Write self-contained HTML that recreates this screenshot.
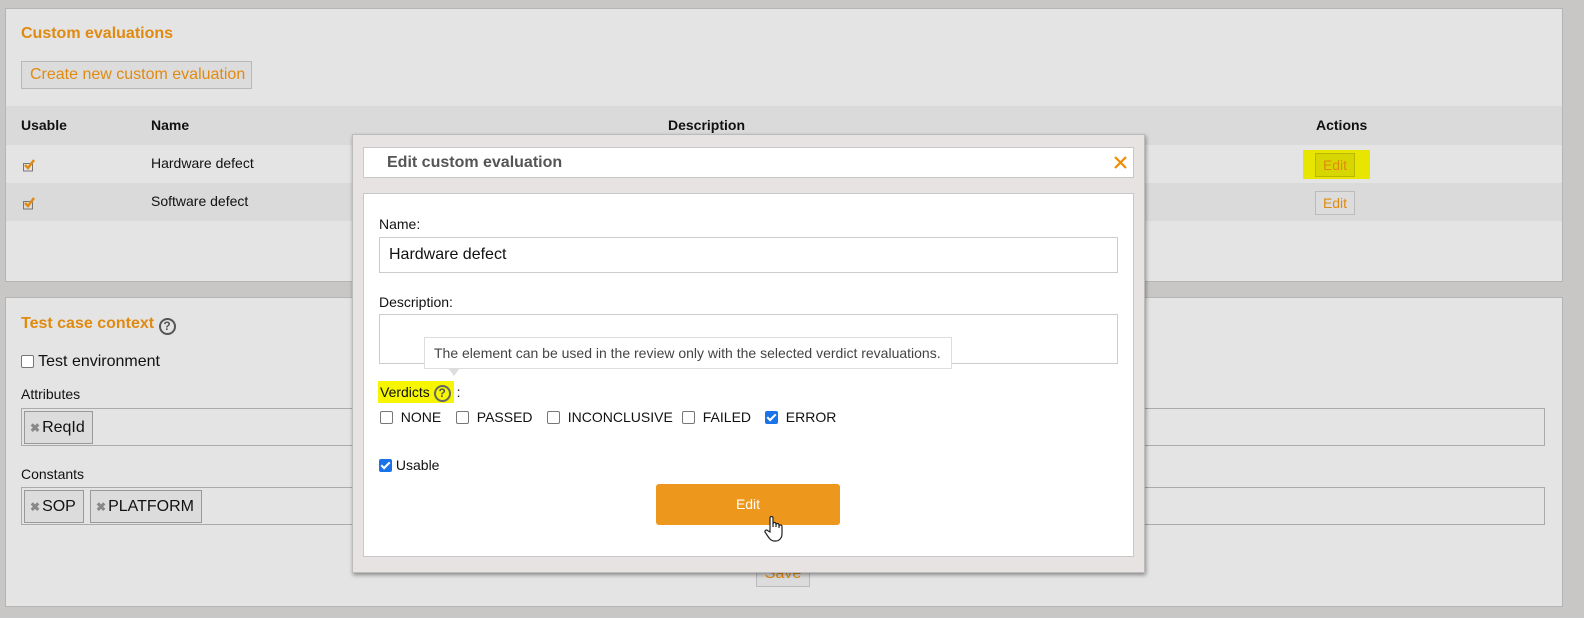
<!DOCTYPE html>
<html><head><meta charset="utf-8"><style>
*{box-sizing:border-box}
body{margin:0;width:1584px;height:618px;background:#c9c7c6;font-family:"Liberation Sans",Arial,sans-serif;position:relative;overflow:hidden;font-size:14px;color:#111}
.a{position:absolute}
.panel{background:#e4e4e4;border:1px solid #b5b5b5}
.or{color:#e08a10;font-weight:bold;font-size:16px}
.cb{display:inline-block;width:13px;height:13px;border:1.5px solid #777;border-radius:2px;background:#fff;vertical-align:-2px}
.cbc{display:inline-block;width:13px;height:13px;border-radius:2px;background:#1a73e8;vertical-align:-2px;position:relative}
.cbc:after{content:"";position:absolute;left:4px;top:1px;width:3px;height:7px;border:solid #fff;border-width:0 2px 2px 0;transform:rotate(45deg)}
.tag{position:absolute;background:#dcdcdc;border:1px solid #999;height:33px;font-size:16px;line-height:31px;padding:0 7px 0 5px}
.tag b{color:#888;font-size:12px;margin-right:2px}
.q{display:inline-block;width:17px;height:17px;border:2px solid #555;border-radius:50%;text-align:center;font-size:12px;line-height:13px;font-weight:bold;color:#555}
</style></head><body>
<div class="a panel" style="left:5px;top:8px;width:1558px;height:274px"></div>
<div class="a or" style="left:21px;top:25px">Custom evaluations</div>
<div class="a" style="left:21px;top:61px;width:231px;height:28px;background:#dcdcdc;border:1px solid #b8b8b8;color:#e08a10;font-size:16px;line-height:26px;padding-left:8px">Create new custom evaluation</div>
<div class="a" style="left:6px;top:106px;width:1556px;height:39px;background:#dadada"></div>
<div class="a" style="left:6px;top:183px;width:1556px;height:38px;background:#dadada"></div>
<div class="a" style="left:21px;top:117px;font-weight:bold">Usable</div>
<div class="a" style="left:151px;top:117px;font-weight:bold">Name</div>
<div class="a" style="left:668px;top:117px;font-weight:bold">Description</div>
<div class="a" style="left:1316px;top:117px;font-weight:bold">Actions</div>
<svg class="a" style="left:22px;top:158px" width="14" height="14" viewBox="0 0 14 14"><rect x="1.5" y="5.5" width="9" height="7.5" fill="none" stroke="#777" stroke-width="1"/><path d="M3 7 L6 10 L12 2" fill="none" stroke="#e08a10" stroke-width="2.5"/></svg>
<svg class="a" style="left:22px;top:196px" width="14" height="14" viewBox="0 0 14 14"><rect x="1.5" y="5.5" width="9" height="7.5" fill="none" stroke="#777" stroke-width="1"/><path d="M3 7 L6 10 L12 2" fill="none" stroke="#e08a10" stroke-width="2.5"/></svg>
<div class="a" style="left:151px;top:155px">Hardware defect</div>
<div class="a" style="left:151px;top:193px">Software defect</div>
<div class="a" style="left:1303px;top:150px;width:67px;height:29px;background:#e8e600"></div>
<div class="a" style="left:1315px;top:153px;width:40px;height:24px;border:1px solid #b8b800;background:#d8d600;color:#e08a10;text-align:center;line-height:22px">Edit</div>
<div class="a" style="left:1315px;top:191px;width:40px;height:24px;border:1px solid #bbb;background:#dcdcdc;color:#e08a10;text-align:center;line-height:22px">Edit</div>

<div class="a panel" style="left:5px;top:297px;width:1558px;height:310px"></div>
<div class="a or" style="left:21px;top:315px">Test case context <span class="q" style="vertical-align:-2px;font-size:12px">?</span></div>
<div class="a" style="left:21px;top:353px;font-size:16px"><span class="cb"></span> Test environment</div>
<div class="a" style="left:21px;top:386px">Attributes</div>
<div class="a" style="left:21px;top:408px;width:1524px;height:38px;border:1px solid #aaa;background:#e4e4e4"></div>
<div class="tag" style="left:24px;top:411px"><b>✖</b>ReqId</div>
<div class="a" style="left:21px;top:466px">Constants</div>
<div class="a" style="left:21px;top:487px;width:1524px;height:38px;border:1px solid #aaa;background:#e4e4e4"></div>
<div class="tag" style="left:24px;top:490px"><b>✖</b>SOP</div>
<div class="tag" style="left:90px;top:490px"><b>✖</b>PLATFORM</div>
<div class="a" style="left:756px;top:560px;width:54px;height:27px;border:1px solid #bbb;background:#dcdcdc;color:#e08a10;font-size:16px;text-align:center;line-height:26px">Save</div>

<div class="a" style="left:352px;top:134px;width:793px;height:439px;background:#e6e3e2;border:1px solid #bbb;box-shadow:1px 2px 4px rgba(0,0,0,.4)"></div>
<div class="a" style="left:363px;top:147px;width:771px;height:31px;background:#fff;border:1px solid #c8c8c8"></div>
<div class="a" style="left:387px;top:154px;font-weight:bold;font-size:16px;color:#555">Edit custom evaluation</div>
<svg class="a" style="left:1114px;top:156px" width="13" height="13" viewBox="0 0 13 13"><path d="M1 1 L12 12 M12 1 L1 12" stroke="#f08c00" stroke-width="2.2"/></svg>
<div class="a" style="left:363px;top:193px;width:771px;height:364px;background:#fff;border:1px solid #c8c8c8"></div>
<div class="a" style="left:379px;top:216px">Name:</div>
<div class="a" style="left:379px;top:237px;width:739px;height:36px;border:1px solid #ccc;font-size:16px;line-height:34px;padding-left:9px">Hardware defect</div>
<div class="a" style="left:379px;top:294px">Description:</div>
<div class="a" style="left:379px;top:314px;width:739px;height:50px;border:1px solid #ccc"></div>
<div class="a" style="left:424px;top:337px;width:528px;height:32px;background:#fff;border:1px solid #ddd;color:#444;line-height:30px;padding-left:9px;font-size:14px">The element can be used in the review only with the selected verdict revaluations.</div>
<div class="a" style="left:448px;top:368px;width:0;height:0;border-left:6px solid transparent;border-right:6px solid transparent;border-top:8px solid #ddd"></div>
<div class="a" style="left:378px;top:381px;width:76px;height:22px;background:#f6f600"></div>
<div class="a" style="left:380px;top:384px">Verdicts <span class="q" style="width:17px;height:17px;border-color:#666">?</span> <span style="margin-left:2px">:</span></div>
<div class="a" style="left:380px;top:409px"><span class="cb"></span>&nbsp; NONE</div>
<div class="a" style="left:456px;top:409px"><span class="cb"></span>&nbsp; PASSED</div>
<div class="a" style="left:547px;top:409px"><span class="cb"></span>&nbsp; INCONCLUSIVE</div>
<div class="a" style="left:682px;top:409px"><span class="cb"></span>&nbsp; FAILED</div>
<div class="a" style="left:765px;top:409px"><span class="cbc"></span>&nbsp; ERROR</div>
<div class="a" style="left:379px;top:457px"><span class="cbc"></span> Usable</div>
<div class="a" style="left:656px;top:484px;width:184px;height:41px;background:#ee971d;border-radius:3px;color:#fff;text-align:center;line-height:41px">Edit</div>
<svg class="a" style="left:763px;top:515px" width="24" height="28" viewBox="0 0 24 28"><path d="M7 14 V3 a1.5 1.5 0 0 1 3 0 V12 V9 a1.5 1.5 0 0 1 3 0 V12 V10 a1.5 1.5 0 0 1 3 0 V13 V11.5 a1.5 1.5 0 0 1 3 0 V19 c0 4 -3 7 -6 7 h-2 c-3 0 -5 -3 -7 -6 l-2 -3 a1.5 1.5 0 0 1 2.5 -1.5 L7 17 Z" fill="#fff" stroke="#222" stroke-width="1.2"/></svg>
</body></html>
